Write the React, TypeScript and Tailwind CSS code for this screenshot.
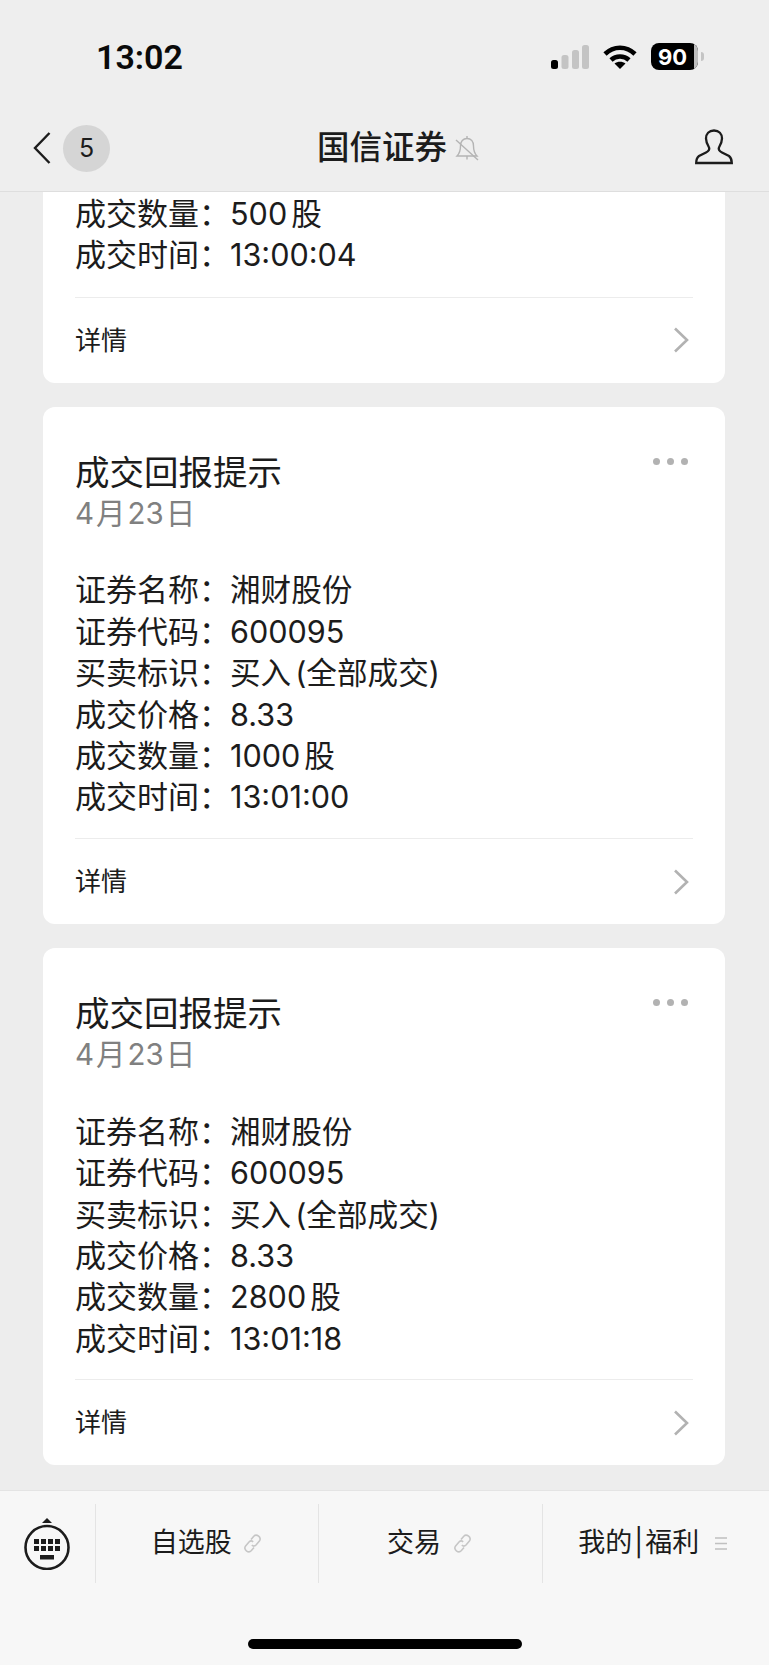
const fontStack = "font-['Inter','Noto_Sans_CJK_SC',sans-serif]";

function Row({ label, children }: { label: string; children: React.ReactNode }) {
  return (
    <div className="flex h-[41.4px] items-center text-[30.6px] leading-[41.4px] text-[#1c1c1c]">
      <span className="w-[155px] shrink-0 text-[31px]">{label}：</span>
      <span>{children}</span>
    </div>
  );
}

function Footer() {
  return (
    <div className="mx-[32px] mt-[21px] flex h-[86px] items-center justify-between border-t border-[#ececec] pr-[4px]">
      <span className="text-[26px] text-[#1c1c1c]">详情</span>
      <svg width="16" height="26" viewBox="0 0 16 26" fill="none" stroke="#b2b2b2" strokeWidth="2.6">
        <path d="M2 1.5 14 13 2 24.5" />
      </svg>
    </div>
  );
}

function Dots() {
  return (
    <div className="absolute right-[37px] top-[51px] flex gap-[7px]">
      <span className="size-[7px] rounded-full bg-[#b2b2b2]" />
      <span className="size-[7px] rounded-full bg-[#b2b2b2]" />
      <span className="size-[7px] rounded-full bg-[#b2b2b2]" />
    </div>
  );
}

function TradeCard({ qty, time }: { qty: string; time: string }) {
  return (
    <div className="relative rounded-[12px] bg-white pt-[45px]">
      <Dots />
      <div className="px-[32px]">
        <div className="text-[34.5px] leading-[41px] text-[#1c1c1c]">成交回报提示</div>
        <div className="text-[29.5px] leading-[41px] text-[#808080]">
          4<span className="mx-[2px]">月</span>23<span className="ml-[2px]">日</span>
        </div>
        <div className="mb-[-0.6px] mt-[35.6px]">
          <Row label="证券名称">湘财股份</Row>
          <Row label="证券代码">600095</Row>
          <Row label="买卖标识">
            买入<span className="ml-[4px]">(全部成交)</span>
          </Row>
          <Row label="成交价格">8.33</Row>
          <Row label="成交数量">
            {qty}
            <span className="ml-[4px]">股</span>
          </Row>
          <Row label="成交时间">{time}</Row>
        </div>
      </div>
      <Footer />
    </div>
  );
}

function StatusIcons() {
  return (
    <div className="flex items-center">
      <svg width="38" height="24" viewBox="0 0 38 24">
        <rect x="0" y="15" width="7" height="9" rx="2.5" fill="#000" />
        <rect x="10.5" y="10" width="7" height="14" rx="2.5" fill="#c4c4c4" />
        <rect x="21" y="5" width="7" height="19" rx="2.5" fill="#c4c4c4" />
        <rect x="31" y="0" width="7" height="24" rx="2.5" fill="#c4c4c4" />
      </svg>
      <svg className="ml-[14px]" width="34" height="24" viewBox="0 0 34 24" fill="none" stroke="#000" strokeWidth="4.6">
        <path d="M2 9C10.5 0.6 23.5 0.6 32 9" />
        <path d="M8 15C13 10.4 21 10.4 26 15" />
        <path d="M17 24 11.5 18.6C14.5 16 19.5 16 22.5 18.6Z" fill="#000" stroke="none" />
      </svg>
      <div className="relative ml-[14px] flex h-[27px] w-[47px] items-center overflow-hidden rounded-[8px] bg-[#000]">
        <span className="absolute right-0 top-0 h-full w-[4px] bg-[#bdbdbd]" />
        <span className="w-[43px] text-center font-['Inter',sans-serif] text-[22px] font-bold leading-none text-white">90</span>
      </div>
      <span className="ml-[3px] h-[9px] w-[3px] rounded-r-full bg-[#c4c4c4]" />
    </div>
  );
}

function LinkIcon() {
  return (
    <svg width="19" height="19" viewBox="0 0 19 19" fill="none" stroke="#c6c6c6" strokeWidth="1.6">
      <path d="M8 5.5 10.8 2.2C12 1 14 1 15.6 2.2 17.4 3.6 17.6 5.6 16.4 7L13 11C11.8 12.2 10 12.2 8.8 11.2" />
      <path d="M11 13.5 8.2 16.8C7 18 5 18 3.4 16.8 1.6 15.4 1.4 13.4 2.6 12L6 8C7.2 6.8 9 6.8 10.2 7.8" />
    </svg>
  );
}

export default function App() {
  return (
    <div className={`flex h-[1665px] w-[769px] flex-col overflow-hidden bg-[#ededed] ${fontStack}`}>
      <header className="h-[192px] shrink-0 border-b border-[#dedede] bg-[#eeeeee]">
        <div className="flex h-[104px] items-start justify-between pl-[96px] pr-[65px] pt-[41px]">
          <span className="font-['Roboto',sans-serif] text-[34px] font-semibold leading-[32px] text-[#0a0a0a]">13:02</span>
          <div className="pt-[2px]">
            <StatusIcons />
          </div>
        </div>
        <div className="flex h-[87px] items-start pl-[33px] pr-[36px]">
          <svg className="mt-[28px]" width="18" height="32" viewBox="0 0 18 32" fill="none" stroke="#1c1c1c" strokeWidth="2.4">
            <path d="M16.5 1 2 16 16.5 31" />
          </svg>
          <div className="ml-[12px] mt-[21px] flex size-[47px] items-center justify-center rounded-full bg-[#d5d5d5] text-[25px] text-[#1c1c1c]">5</div>
          <div className="ml-[207px] mt-[23px] text-[32.5px] font-medium leading-[42px] text-[#1c1c1c]">国信证券</div>
          <svg className="ml-[8px] mt-[31px]" width="24" height="26" viewBox="0 0 24 26" fill="none" stroke="#b4b4b4" strokeWidth="1.4">
            <path d="M2 21C5 18 5.5 14 5.5 11C5.5 6.5 8 3.5 12 3.5C16 3.5 18.5 6.5 18.5 11C18.5 14 19 18 22 21Z" />
            <path d="M12 3.5V1M12 21V24.5M1 5 23 25" />
          </svg>
          <svg className="ml-auto mt-[25px]" width="38" height="36" viewBox="0 0 38 36" fill="none" stroke="#1c1c1c" strokeWidth="2.3">
            <path d="M19 1.5C14 1.5 11 5 11 9.5C11 13 12.5 16 14 18.5C15 21 13 22.5 11 23.5L4 27C2 28.5 1.2 31 1.2 34H36.8C36.8 31 36 28.5 34 27L27 23.5C25 22.5 23 21 24 18.5C25.5 16 27 13 27 9.5C27 5 24 1.5 19 1.5Z" />
          </svg>
        </div>
      </header>

      <main className="flex flex-1 flex-col gap-[24px] overflow-hidden px-[43px] pr-[44px]">
        <div className="rounded-b-[12px] bg-white pt-[1px]">
          <div className="px-[32px]">
            <Row label="成交数量">
              500<span className="ml-[4px]">股</span>
            </Row>
            <Row label="成交时间">13:00:04</Row>
          </div>
          <Footer />
        </div>
        <TradeCard qty="1000" time="13:01:00" />
        <TradeCard qty="2800" time="13:01:18" />
      </main>

      <footer className="h-[175px] shrink-0 border-t border-[#e4e4e4] bg-[#f7f7f7]">
        <div className="mt-[13px] flex h-[79px] items-stretch">
          <div className="flex w-[95px] shrink-0 items-center justify-center pr-[1px]">
            <svg width="46" height="52" viewBox="0 0 46 52">
              <path d="M23 0 28 5H18Z" fill="#1c1c1c" />
              <circle cx="23" cy="29.5" r="21.5" fill="none" stroke="#1c1c1c" strokeWidth="2.6" />
              <g fill="#1c1c1c">
                <rect x="10" y="21" width="5" height="5" />
                <rect x="17" y="21" width="5" height="5" />
                <rect x="24" y="21" width="5" height="5" />
                <rect x="31" y="21" width="5" height="5" />
                <rect x="10" y="28" width="5" height="5" />
                <rect x="17" y="28" width="5" height="5" />
                <rect x="24" y="28" width="5" height="5" />
                <rect x="31" y="28" width="5" height="5" />
                <rect x="16" y="37" width="14" height="4.5" />
              </g>
            </svg>
          </div>
          <div className="flex flex-1 items-center justify-center gap-[11px] border-l border-[#e4e4e4] pr-[2px] text-[27px] text-[#1c1c1c]">
            <span>自选股</span>
            <LinkIcon />
          </div>
          <div className="flex flex-1 items-center justify-center gap-[12px] border-l border-[#e4e4e4] pr-[2px] text-[27px] text-[#1c1c1c]">
            <span>交易</span>
            <LinkIcon />
          </div>
          <div className="flex flex-1 items-center justify-center gap-[16px] border-l border-[#e4e4e4] pr-[6px] text-[27px] text-[#1c1c1c]">
            <span>
              我的<span className="mx-[2px]">|</span>福利
            </span>
            <svg width="12" height="13" viewBox="0 0 12 13" fill="none" stroke="#c0c0c0" strokeWidth="1.5">
              <path d="M0 1H12M0 6.5H12M0 12H12" />
            </svg>
          </div>
        </div>
        <div className="mx-auto mt-[56px] h-[10px] w-[274px] rounded-full bg-black" />
      </footer>
    </div>
  );
}
